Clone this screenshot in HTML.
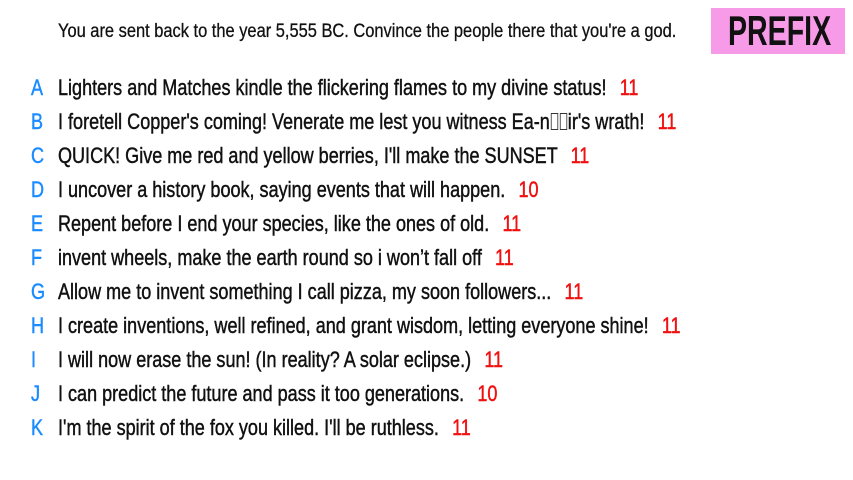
<!DOCTYPE html>
<html><head><meta charset="utf-8"><style>
html,body{margin:0;padding:0;background:#fff;width:853px;height:480px;overflow:hidden;font-family:"Liberation Sans Narrow","Liberation Sans",sans-serif;color:#111}
.h{position:absolute;left:58px;top:21px;font-size:19px;white-space:nowrap;transform:scaleX(0.865);transform-origin:0 0;-webkit-text-stroke:0.3px #111}
.p{position:absolute;left:711px;top:8px;width:134px;height:46px;background:#f79be9}
.p span{position:absolute;left:17px;top:0;font-size:42px;font-weight:bold;line-height:46px;color:#111;transform:scaleX(0.68);transform-origin:0 0;white-space:nowrap}
.r{position:absolute;left:0;height:34px;font-size:22px;white-space:nowrap;line-height:34px;-webkit-text-stroke:0.45px currentColor}
.l{position:absolute;left:31px;color:#1a8cff;transform:scaleX(0.82);transform-origin:0 0}
.t{position:absolute;left:58px;transform:scaleX(0.82);transform-origin:0 0}
.n{color:#f01010;margin-left:10px}
.tf{display:inline-block;width:7px;height:15px;border:1px solid #333;margin:0 1px;vertical-align:-1px;-webkit-text-stroke:0}
</style></head><body>
<div class="h">You are sent back to the year 5,555 BC. Convince the people there that you're a god.</div>
<div class="p"><span>PREFIX</span></div>
<div class="r" style="top:71px"><span class="l">A</span><span class="t">Lighters and Matches kindle the flickering flames to my divine status! <span class="n">11</span></span></div>
<div class="r" style="top:105px"><span class="l">B</span><span class="t">I foretell Copper's coming! Venerate me lest you witness Ea-n<span class="tf"></span><span class="tf"></span>ir's wrath! <span class="n">11</span></span></div>
<div class="r" style="top:139px"><span class="l">C</span><span class="t">QUICK! Give me red and yellow berries, I'll make the SUNSET <span class="n">11</span></span></div>
<div class="r" style="top:173px"><span class="l">D</span><span class="t">I uncover a history book, saying events that will happen. <span class="n">10</span></span></div>
<div class="r" style="top:207px"><span class="l">E</span><span class="t">Repent before I end your species, like the ones of old. <span class="n">11</span></span></div>
<div class="r" style="top:241px"><span class="l">F</span><span class="t">invent wheels, make the earth round so i won’t fall off <span class="n">11</span></span></div>
<div class="r" style="top:275px"><span class="l">G</span><span class="t">Allow me to invent something I call pizza, my soon followers... <span class="n">11</span></span></div>
<div class="r" style="top:309px"><span class="l">H</span><span class="t">I create inventions, well refined, and grant wisdom, letting everyone shine! <span class="n">11</span></span></div>
<div class="r" style="top:343px"><span class="l">I</span><span class="t">I will now erase the sun! (In reality? A solar eclipse.) <span class="n">11</span></span></div>
<div class="r" style="top:377px"><span class="l">J</span><span class="t">I can predict the future and pass it too generations. <span class="n">10</span></span></div>
<div class="r" style="top:411px"><span class="l">K</span><span class="t">I'm the spirit of the fox you killed. I'll be ruthless. <span class="n">11</span></span></div>
</body></html>
